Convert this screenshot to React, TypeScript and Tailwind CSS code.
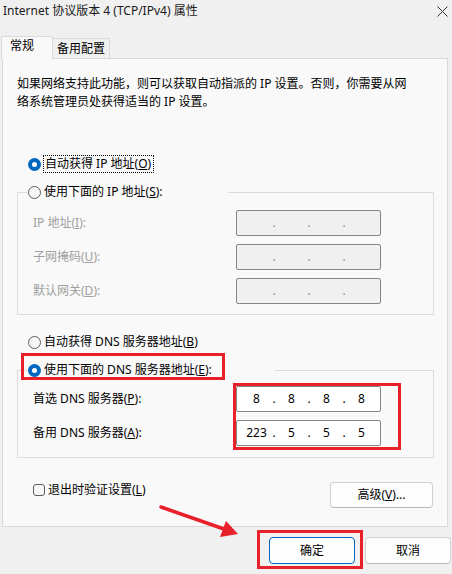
import { Fragment } from "react";

function Radio({ checked }: { checked?: boolean }) {
  if (checked) {
    return (
      <span className="flex h-[13px] w-[13px] shrink-0 items-center justify-center rounded-full bg-[#0067c0]">
        <span className="h-[5px] w-[5px] rounded-full bg-white" />
      </span>
    );
  }
  return <span className="h-[13px] w-[13px] shrink-0 rounded-full border border-[#5d5d5d] bg-[#f6f6f6]" />;
}

function IpBox({ parts, disabled }: { parts: string[]; disabled?: boolean }) {
  return (
    <div
      className={`flex h-[26px] w-[145px] items-center rounded-[2px] border border-[#868686] pl-[2px] pr-px ${
        disabled ? "bg-[#f0f0f0] text-[#8a8a8a]" : "bg-white text-black"
      }`}
    >
      {parts.map((p, i) => (
        <Fragment key={i}>
          {i > 0 && <span className="flex w-0 justify-center">.</span>}
          <span className="w-[35px] text-center">{p}</span>
        </Fragment>
      ))}
    </div>
  );
}

function Row({ label, children, dim }: { label: React.ReactNode; children: React.ReactNode; dim?: boolean }) {
  return (
    <div className="flex h-[26px] items-center pl-[15px] pr-[52px]">
      <span className={`flex-1 ${dim ? "text-[#a0a0a0]" : "text-black"}`}>{label}</span>
      {children}
    </div>
  );
}

export default function App() {
  const empty = ["", "", "", ""];
  return (
    <div className="relative flex h-[574px] w-[452px] flex-col overflow-hidden bg-[#f0f0f0] font-['Noto_Sans','Noto_Sans_CJK_SC',sans-serif] text-[12px] leading-[18px] text-black">
      {/* title bar */}
      <div className="flex h-[22px] items-center justify-between pl-[3px] pr-[4px]">
        <span className="text-[#1a1a1a]">Internet 协议版本 4 (TCP/IPv4) 属性</span>
        <svg width="11" height="11" viewBox="0 0 11 11" className="mt-px">
          <path d="M0.5 0.5 L10.5 10.5 M10.5 0.5 L0.5 10.5" stroke="#333" strokeWidth="1" />
        </svg>
      </div>

      {/* tabs */}
      <div className="mt-[14px] flex h-[23px] items-end pl-px">
        <div className="relative z-10 h-[23px] w-[52px] border-x border-t border-[#d9d9d9] bg-[#f9f9f9] pl-[8px]">
          常规
        </div>
        <div className="-ml-px h-[21px] w-[58px] border-x border-t border-[#d9d9d9] bg-[#f0f0f0] pl-[4px] pt-px">
          备用配置
        </div>
      </div>

      {/* panel */}
      <div className="-mt-px ml-[2px] flex w-[446px] flex-col border border-[#d9d9d9] bg-[#f9f9f9] pb-[18px] pt-[16px]">
        <p className="ml-[14px]">
          如果网络支持此功能，则可以获取自动指派的 IP 设置。否则，你需要从网
          <br />
          络系统管理员处获得适当的 IP 设置。
        </p>

        <div className="ml-[25px] mt-[44px] flex h-[18px] items-center gap-[2px]">
          <Radio checked />
          <span className="border border-dotted border-black pl-px pr-[2px] leading-[16px]">
            自动获得 IP 地址(<u>O</u>)
          </span>
        </div>

        <div className="ml-[14px] mr-[13px] mt-[19px] border border-[#dcdcdc] pb-[10px]">
          <div className="-mt-[10px] ml-[9px] flex h-[18px] w-[201px] items-center gap-[3px] bg-[#f9f9f9] pl-px">
            <Radio />
            <span>
              使用下面的 IP 地址(<u>S</u>):
            </span>
          </div>
          <div className="mt-[9px] flex flex-col gap-[8px]">
            <Row dim label={<>IP 地址(<u>I</u>):</>}>
              <IpBox parts={empty} disabled />
            </Row>
            <Row dim label={<>子网掩码(<u>U</u>):</>}>
              <IpBox parts={empty} disabled />
            </Row>
            <Row dim label={<>默认网关(<u>D</u>):</>}>
              <IpBox parts={empty} disabled />
            </Row>
          </div>
        </div>

        <div className="ml-[25px] mt-[18px] flex h-[18px] items-center gap-[3px]">
          <Radio />
          <span>
            自动获得 DNS 服务器地址(<u>B</u>)
          </span>
        </div>

        <div className="ml-[14px] mr-[13px] mt-[19px] border border-[#dcdcdc] pb-[11px]">
          <div className="relative -mt-[10px] ml-[9px] flex h-[18px] w-[248px] items-center gap-[3px] bg-[#f9f9f9] pl-px">
            <Radio checked />
            <span>
              使用下面的 DNS 服务器地址(<u>E</u>):
            </span>
            <div className="absolute left-[-6px] top-[-8px] h-[27px] w-[204px] border-[3px] border-[#e8202a]" />
          </div>
          <div className="mt-[7px] flex flex-col gap-[8px]">
            <Row label={<>首选 DNS 服务器(<u>P</u>):</>}>
              <div className="relative">
                <IpBox parts={["8", "8", "8", "8"]} />
                <div className="absolute left-[-3px] top-[-3px] h-[67px] w-[168px] border-[3px] border-[#e8202a]" />
              </div>
            </Row>
            <Row label={<>备用 DNS 服务器(<u>A</u>):</>}>
              <IpBox parts={["223", "5", "5", "5"]} />
            </Row>
          </div>
        </div>

        <div className="ml-[30px] mr-[14px] mt-[24px] flex items-start justify-between">
          <label className="-mt-px flex items-center gap-[3px]">
            <span className="h-[12px] w-[12px] rounded-[3px] border border-[#5d5d5d] bg-[#f6f6f6]" />
            <span>
              退出时验证设置(<u>L</u>)
            </span>
          </label>
          <button className="h-[26px] w-[103px] rounded-[4px] border border-[#d0d0d0] border-b-[#b8b8b8] bg-[#fdfdfd]">
            高级(<u>V</u>)...
          </button>
        </div>
      </div>

      {/* dialog buttons */}
      <div className="mt-[10px] flex justify-end gap-[10px] pr-px">
        <div className="relative">
          <button className="h-[27px] w-[86px] rounded-[4px] border border-[#0067c0] bg-[#fdfdfd]">确定</button>
          <div className="absolute left-[-12px] top-[-7px] h-[39px] w-[106px] border-[3px] border-[#e8202a]" />
        </div>
        <button className="h-[27px] w-[86px] rounded-[4px] border border-[#d0d0d0] border-b-[#b8b8b8] bg-[#fdfdfd]">
          取消
        </button>
      </div>

      {/* annotation arrow */}
      <svg className="pointer-events-none absolute left-0 top-0" width="452" height="574" viewBox="0 0 452 574">
        <line x1="161" y1="507" x2="224" y2="529" stroke="#e8202a" strokeWidth="3.5" strokeLinecap="round" />
        <polygon points="238,534 220,537 226,521" fill="#e8202a" />
      </svg>
    </div>
  );
}
